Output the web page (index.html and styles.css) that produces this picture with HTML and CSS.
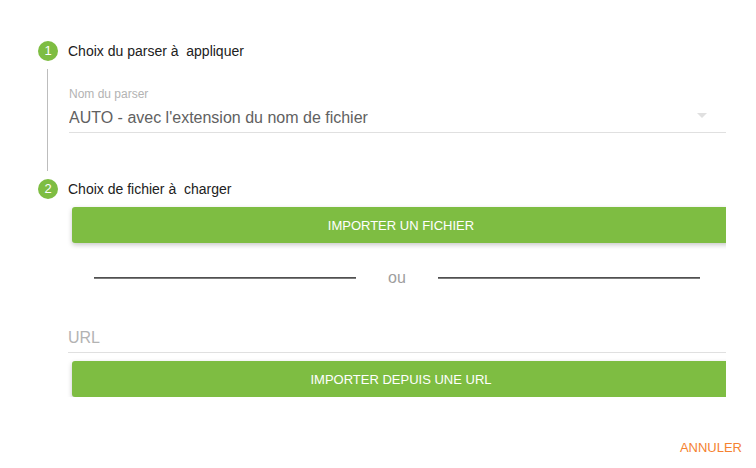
FILE: index.html
```html
<!DOCTYPE html>
<html lang="fr">
<head>
<meta charset="utf-8">
<title>Importer</title>
<link rel="stylesheet" href="styles.css">
</head>
<body>
<form class="dialog">
  <div class="stepper">
    <section class="step">
      <header class="step-header">
        <span class="step-number">1</span>
        <h2 class="step-title">Choix du parser à&nbsp; appliquer</h2>
      </header>
      <div class="step-body step-body-linked">
        <div class="select-field">
          <label class="field-label" for="parser">Nom du parser</label>
          <div class="select-box">
            <select class="select" id="parser">
              <option>AUTO - avec l'extension du nom de fichier</option>
            </select>
            <svg class="select-arrow" viewBox="0 0 10 5" aria-hidden="true"><path d="M0 0h10L5 5z"/></svg>
          </div>
        </div>
      </div>
    </section>
    <section class="step">
      <header class="step-header">
        <span class="step-number">2</span>
        <h2 class="step-title">Choix de fichier à&nbsp; charger</h2>
      </header>
      <div class="step-body">
        <button class="button" type="button">IMPORTER UN FICHIER</button>
        <div class="divider"><span class="rule"></span><span class="or">ou</span><span class="rule"></span></div>
        <input class="url-input" type="url" placeholder="URL" aria-label="URL">
        <button class="button" type="button">IMPORTER DEPUIS UNE URL</button>
      </div>
    </section>
  </div>
  <footer class="actions">
    <button class="cancel" type="button">ANNULER</button>
  </footer>
</form>
</body>
</html>
```
FILE: styles.css
```css
* {
  box-sizing: border-box;
}

body {
  margin: 0;
  background: #fff;
  color: rgba(0, 0, 0, 0.87);
  font-family: "Liberation Sans", Arial, sans-serif;
  font-size: 14px;
}

button,
input,
select {
  font: inherit;
  margin: 0;
  border: 0;
  border-radius: 0;
  outline: 0;
}

.stepper {
  display: flex;
  flex-direction: column;
  gap: 8px;
  margin-right: 30px;
  padding: 41px 0 0 38px;
  overflow: hidden;
}

.step-header {
  display: flex;
  align-items: center;
  gap: 10px;
  height: 20px;
}

.step-number {
  width: 20px;
  height: 20px;
  border-radius: 50%;
  background: #7ebd42;
  color: #fff;
  font-size: 13px;
  line-height: 20px;
  text-align: center;
}

.step-title {
  margin: 0;
  color: #212121;
  font-size: 14px;
  font-weight: 400;
  line-height: 20px;
}

.step-body {
  margin: 8px 0 0 9px;
  padding-left: 21px;
}

.step-body-linked {
  padding: 16px 0 38px 20px;
  border-left: 1px solid #bdbdbd;
}

.select-field {
  padding-left: 1px;
}

.field-label {
  display: block;
  color: #b3b3b3;
  font-size: 12px;
  line-height: 18px;
}

.select-box {
  position: relative;
}

.select {
  display: block;
  width: 100%;
  height: 30px;
  padding: 0 32px 0 0;
  border-bottom: 1px solid #e0e0e0;
  appearance: none;
  background: transparent;
  color: #616161;
  font-size: 16px;
}

.select-arrow {
  position: absolute;
  top: 10px;
  right: 19px;
  width: 10px;
  height: 5px;
  fill: #e0e0e0;
  pointer-events: none;
}

.button {
  display: block;
  width: 100%;
  height: 36px;
  margin-left: 4px;
  padding: 0;
  border-radius: 3px;
  background: #7ebd42;
  box-shadow: 0 2px 5px rgba(0, 0, 0, 0.22);
  color: #fff;
  font-size: 13px;
  text-align: center;
}

.divider {
  display: flex;
  align-items: center;
  gap: 32px;
  height: 70px;
  padding: 0 26px;
}

.rule {
  flex: 1;
  height: 2px;
  border-top: 1px solid #505050;
  border-bottom: 1px solid #7c7c7c;
}

.or {
  color: #9e9e9e;
  font-size: 16px;
}

.url-input {
  display: block;
  width: 100%;
  height: 30px;
  margin: 10px 0 8px;
  padding: 0;
  border-bottom: 1px solid #e0e0e0;
  background: transparent;
  color: #616161;
  font-size: 16px;
}

.url-input::placeholder {
  color: #b3b3b3;
  opacity: 1;
}

.actions {
  display: flex;
  justify-content: flex-end;
  padding: 32px 14px 0 0;
}

.cancel {
  height: 36px;
  padding: 0;
  background: transparent;
  color: #f58231;
  font-size: 13px;
}
```
